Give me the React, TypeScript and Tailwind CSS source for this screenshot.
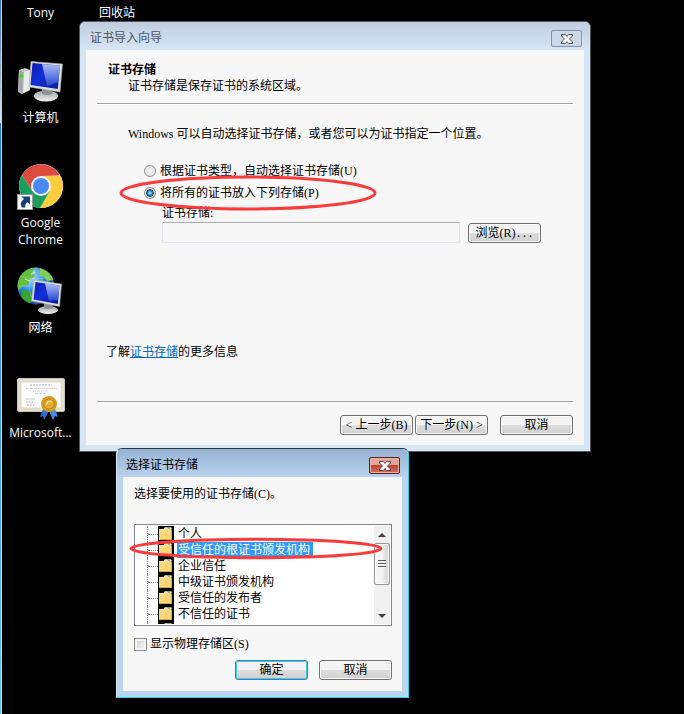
import React, { useState } from 'react';

const stores = [
  '个人',
  '受信任的根证书颁发机构',
  '企业信任',
  '中级证书颁发机构',
  '受信任的发布者',
  '不信任的证书',
];

// Half-width latin run inside the 12px dialog text
const En: React.FC<{ children: React.ReactNode; mono?: boolean }> = ({ children, mono }) => (
  <span className={`leading-none whitespace-pre ${mono ? "font-['Liberation_Mono',monospace] text-[10px]" : "font-['Liberation_Serif',serif]"}`}>
    {children}
  </span>
);

const Screen: React.FC<{ id: string }> = ({ id }) => (
  <defs>
    <linearGradient id={`${id}-screen`} x1="0" y1="0" x2="1" y2="1">
      <stop offset="0" stopColor="#0a1cb4" />
      <stop offset="0.45" stopColor="#1230d8" />
      <stop offset="1" stopColor="#0a1a9c" />
    </linearGradient>
    <linearGradient id={`${id}-shine`} x1="0" y1="0" x2="0" y2="1">
      <stop offset="0" stopColor="#d3e0fb" />
      <stop offset="1" stopColor="#2a52d8" />
    </linearGradient>
    <linearGradient id={`${id}-base`} x1="0" y1="0" x2="0" y2="1">
      <stop offset="0" stopColor="#9aa0a2" />
      <stop offset="1" stopColor="#f1f3f3" />
    </linearGradient>
  </defs>
);

const ComputerIcon = () => (
  <svg viewBox="0 0 48 48" className="size-12" aria-hidden="true">
    <Screen id="pc" />
    <path d="M2 13l6-2 5 2v20l-8 4-4-2z" fill="#c9cccb" />
    <path d="M2 13l5 2-1 21-5-2z" fill="#a5aaa9" />
    <path d="M7 15l6-2v20l-7 3z" fill="#e9ebea" />
    <path d="M3 17l3 1v3l-3-1z" fill="#37d420" />
    <ellipse cx="29" cy="39" rx="12" ry="5.5" fill="url(#pc-base)" />
    <path d="M25 31h9l1 6q-5 2-10 0z" fill="#8c9294" />
    <path d="M14 4.500L45.500 7 43 35 12 30z" fill="#dfe0dc" stroke="#a9aaa6" strokeWidth="0.6" />
    <path d="M15.500 6L43 8.500 40.800 32 13.500 28z" fill="url(#pc-screen)" />
    <path d="M25 7L43 8.500 41.600 25 30 29z" fill="url(#pc-shine)" opacity="0.8" />
  </svg>
);

const ChromeIcon = () => (
  <svg viewBox="0 0 48 48" className="size-12" aria-hidden="true">
    <circle cx="24" cy="24" r="22" fill="#fff" />
    <path d="M24 24L5 13A22 22 0 0 1 43 13.500L24 14z" fill="#dd4b3e" />
    <path d="M24 14h19.500A22 22 0 0 1 22.500 46L32.700 29z" fill="#ffcd40" />
    <path d="M5 13a22 22 0 0 0 18 33l9.700-17L24 30l-8.700-1z" fill="#1a9f5d" />
    <path d="M5 13l10.300 16L14 22l10-8z" fill="#dd4b3e" />
    <circle cx="24" cy="24" r="10" fill="#f4f4f4" />
    <circle cx="24" cy="24" r="8" fill="#4a8af4" />
    <path d="M0.500 32.500h15v15h-15z" fill="#fff" stroke="#9a9a9a" />
    <path d="M4.500 34.500H13v8l-2.500-2.300Q7.500 42 8.500 45.500H5Q1.500 41 7 37z" fill="#173f7c" />
  </svg>
);

const NetworkIcon = () => (
  <svg viewBox="0 0 48 48" className="size-12" aria-hidden="true">
    <Screen id="net" />
    <defs>
      <radialGradient id="globe" cx="0.35" cy="0.25" r="0.8">
        <stop offset="0" stopColor="#b6e4ff" />
        <stop offset="0.45" stopColor="#2f8fe0" />
        <stop offset="1" stopColor="#11299a" />
      </radialGradient>
      <clipPath id="globe-clip"><circle cx="19" cy="19" r="18.500" /></clipPath>
    </defs>
    <circle cx="19" cy="19" r="18.500" fill="url(#globe)" />
    <g clipPath="url(#globe-clip)">
      <path d="M3 7q6-8 14-6l-2 5 3 3-5 4-2 5-5 1-4 4-4-6z" fill="#64bf3e" />
      <path d="M5 23l7 1 5 5-2 6-4 2-7-6z" fill="#39a52c" />
      <path d="M23 1l9 4 5 8-7 1-3-4-4-1z" fill="#7fcf50" />
      <path d="M14 7l4-2M8 12l5 2" stroke="#e5f58a" />
      <path d="M1 19h36M19 0q-14 19 0 38M19 0q14 19 0 38M4 9q15 6 31 0" fill="none" stroke="#bfe2ff" strokeWidth="0.5" opacity="0.6" />
    </g>
    <ellipse cx="31" cy="43" rx="10" ry="4" fill="url(#net-base)" />
    <path d="M27 35h8l1 6q-5 2-9 0z" fill="#8c9294" />
    <path d="M17 13L44.500 17 42.500 39.500 14.500 34z" fill="#dfe0dc" stroke="#a9aaa6" strokeWidth="0.6" />
    <path d="M18.500 15L42.500 18.500 40.800 37 16.500 32.500z" fill="url(#net-screen)" />
    <path d="M28 16.500l14.500 2L41 33l-9 1z" fill="url(#net-shine)" opacity="0.8" />
  </svg>
);

const CertificateIcon = () => (
  <svg viewBox="0 0 48 48" className="size-12" aria-hidden="true">
    <rect x="0.500" y="6.500" width="47" height="33" rx="1.500" fill="#e6dfcf" stroke="#cdc3ad" />
    <rect x="4" y="10" width="40" height="26" fill="#fdfdfb" stroke="#d2cabb" strokeWidth="0.6" />
    <path d="M13 13h22" stroke="#a9b0c6" strokeDasharray="2 1" />
    <path d="M9 16.500h31M16 19h16M18 21.500h12" stroke="#cdd2de" strokeDasharray="3 1" />
    <path d="M9 27h9M9 30h7" stroke="#c0c7dc" />
    <path d="M10 33h7" stroke="#e59a80" strokeDasharray="2 1" />
    <path d="M26 37l6 2-5 9-1-4-3 1z" fill="#2b6fd6" />
    <path d="M32 39l6-2 3 8-3-1-2 4z" fill="#3f8be6" />
    <circle cx="32" cy="32" r="8" fill="#d59b1d" />
    <circle cx="32" cy="32" r="5" fill="#e3ae35" stroke="#b97d10" strokeWidth="0.8" />
    <path d="M29 33q2-5 6-3" fill="none" stroke="#fbe29a" strokeWidth="1.200" />
  </svg>
);

const FolderIcon = () => (
  <svg viewBox="0 0 16 16" className="size-4 shrink-0" aria-hidden="true">
    <path d="M0 0h16v16H0z" fill="#000" />
    <path d="M1 3h5V1.500h7.500V14H1z" fill="#f6d77c" />
    <path d="M1 4h5.500l1-1.500H13.500" fill="none" stroke="#fff3b8" />
    <path d="M7 1.500h6v1.500H7z" fill="#f4f0dc" />
    <path d="M9.500 1.500h2.500v1H9.500z" fill="#4a8ed0" />
    <path d="M1 13.500h12.500V4" fill="none" stroke="#d9a93f" />
  </svg>
);

const CloseGlyph: React.FC<{ active?: boolean }> = ({ active }) => (
  <svg viewBox="0 0 12 10" className="w-3 h-2.5" aria-hidden="true">
    <path
      d="M0.500 0.500h4L6 2.500 7.500 0.500h4v1.500L8.500 5l3 3v1.500h-4L6 7.500 4.500 9.500h-4V8l3-3-3-3z"
      fill="#fff"
      stroke={active ? '#6d4247' : '#4d5766'}
      strokeWidth="1"
      strokeLinejoin="round"
    />
  </svg>
);

const Mark: React.FC<{ className: string }> = ({ className }) => (
  <svg viewBox="0 0 256 36" preserveAspectRatio="none" className={`absolute pointer-events-none overflow-visible ${className}`} aria-hidden="true">
    <ellipse cx="128" cy="18" rx="127" ry="16" fill="none" stroke="#fb3b3b" strokeWidth="3" vectorEffect="non-scaling-stroke" />
  </svg>
);

const PushButton: React.FC<{ children: React.ReactNode; primary?: boolean }> = ({ children, primary }) => (
  <button className={`w-[73px] h-5 flex items-center justify-center rounded-[3px] border whitespace-nowrap bg-linear-to-b from-[#f3f3f3] from-50% via-[#dedede] via-50% to-[#d0d0d0] ${
    primary ? 'border-[#3c7fb1] shadow-[inset_0_0_0_1px_#48c8f0]' : 'border-[#707070] shadow-[inset_0_0_0_1px_#fafafa]'
  }`}>
    <span>{children}</span>
  </button>
);

const DesktopIcon: React.FC<{ icon: React.ReactNode; label: string }> = ({ icon, label }) => (
  <li className="h-[105px]">
    <a href="#" className="flex flex-col items-center gap-1 text-center">
      {icon}
      <span className="w-[68px]">{label}</span>
    </a>
  </li>
);

const WizardWindow = () => {
  const [mode, setMode] = useState('manual');
  const radio = "appearance-none size-3 shrink-0 rounded-full border border-[#8e8f8f] bg-radial from-[#f6f6f6] to-[#cfd3d6] shadow-[inset_0_0_0_1px_#f4f4f4] checked:from-[#7fd8f8] checked:from-10% checked:via-[#0f4a78] checked:via-50% checked:to-[#e4e6e8] checked:to-60%";

  return (
    <section aria-label="证书导入向导" className="absolute left-[79px] top-[21px] w-[512px] rounded-t-md border border-[#54555c] bg-[#d6e6f5] px-1.5 pb-1.5">
      <div className="absolute inset-x-0 top-0 h-7 rounded-t-md bg-linear-to-b from-[#c0cddf] to-[#d6e6f5]" />
      <header className="relative flex items-center justify-between pt-2 pb-[3px] pl-1 pr-0.5">
        <h1 className="text-[#4b5560] leading-[17px]">证书导入向导</h1>
        <button aria-label="关闭" className="w-[31px] h-[17px] flex items-center justify-center rounded-[2px] border border-[#8390ae] bg-[#cad8e8]">
          <CloseGlyph />
        </button>
      </header>

      <div className="bg-[#f7f7f7] px-[11px] pt-3 pb-2.5">
        <div className="border-b border-[#a0a0a0] shadow-[0_1px_0_#fff] pb-[9px] pl-[11px]">
          <h2 className="font-bold">证书存储</h2>
          <p className="pl-5">证书存储是保存证书的系统区域。</p>
        </div>

        <p className="mt-[22px] pl-[31px]"><En>Windows </En>可以自动选择证书存储，或者您可以为证书指定一个位置。</p>

        <div className="mt-[21px] pl-[47px] flex flex-col gap-1.5">
          <label className="flex items-center gap-1">
            <input type="radio" name="mode" className={radio} checked={mode === 'auto'} onChange={() => setMode('auto')} />
            <span>根据证书类型，自动选择证书存储<En>(U)</En></span>
          </label>
          <label className="flex items-center gap-1">
            <input type="radio" name="mode" className={radio} checked={mode === 'manual'} onChange={() => setMode('manual')} />
            <span>将所有的证书放入下列存储<En>(P)</En></span>
          </label>
        </div>

        <div className="mt-1 pl-[65px] pr-8">
          <label htmlFor="store" className="block">证书存储<En>:</En></label>
          <div className="flex items-center gap-2 mt-px">
            <input id="store" type="text" readOnly className="min-w-0 flex-1 h-[21px] border border-t-[#abadb3] border-x-[#e2e3ea] border-b-[#e3e9ef] bg-[#f7f7f7] px-1 outline-none" />
            <PushButton>浏览<En>(R)</En><En mono>...</En></PushButton>
          </div>
        </div>

        <p className="mt-[101px] pl-[9px]">了解<a href="#" className="text-[#0066cc] underline">证书存储</a>的更多信息</p>

        <footer className="mt-[41px] pt-[13px] border-t border-[#a0a0a0] shadow-[inset_0_1px_0_#fff] flex justify-end">
          <div className="flex gap-0.5 mr-3">
            <PushButton><En>{'< '}</En>上一步<En>(B)</En></PushButton>
            <PushButton>下一步<En>{'(N) >'}</En></PushButton>
          </div>
          <PushButton>取消</PushButton>
        </footer>
      </div>
      <Mark className="left-10 top-[153px] w-64 h-9" />
    </section>
  );
};

const StoreWindow = () => {
  const [selected, setSelected] = useState(1);

  return (
    <section aria-label="选择证书存储" className="absolute left-[116px] top-[448px] w-[293px] rounded-t-md border border-t-[#2a3a42] border-l-[#d8ecf5] border-r-[#2fd0ea] border-b-[#2fd0ea] bg-[#bcd5ef] px-1.5 pb-1.5">
      <div className="absolute inset-x-0 top-0 h-7 rounded-t-md bg-linear-to-b from-[#98b3d3] to-[#b9d1ec]" />
      <header className="relative flex items-center justify-between pt-2 pb-[3px] pl-[3px] pr-0.5">
        <h1 className="leading-[17px]">选择证书存储</h1>
        <button aria-label="关闭" className="w-[31px] h-[17px] flex items-center justify-center rounded-[2px] border border-[#5a1f28] bg-linear-to-b from-[#e2a598] from-45% via-[#c0412f] via-50% to-[#d0735c] shadow-[inset_0_0_0_1px_#e9b3a6]">
          <CloseGlyph active />
        </button>
      </header>

      <div className="bg-[#f7f7f7] pl-[11px] pr-2.5 pt-[9px] pb-[11px]">
        <p>选择要使用的证书存储<En>(C)</En>。</p>

        <div className="mt-[22px] h-[102px] flex border border-[#828790] bg-white py-px pr-px overflow-hidden">
          <ul role="tree" className="flex-1 overflow-hidden">
            {stores.map((name, i) => (
              <li key={i} role="treeitem" aria-selected={i === selected} onClick={() => setSelected(i)} className="flex items-center h-4 ml-3 border-l border-dotted border-[#808080]">
                <span className="w-2.5 border-t border-dotted border-[#808080]" />
                <FolderIcon />
                <span className={`ml-[3px] pl-px pr-[3px] ${i === selected ? 'bg-[#3399ff] text-white' : ''}`}>{name}</span>
              </li>
            ))}
            {/* top of the next folder, below the fold */}
            <li aria-hidden="true" className="flex items-center h-4 ml-3 pl-2.5 border-l border-dotted border-[#808080]">
              <FolderIcon />
            </li>
          </ul>
          <div className="w-4 flex flex-col bg-[#f0f0f0]">
            <button aria-label="向上" className="h-[17px] flex items-center justify-center">
              <svg viewBox="0 0 8 4" className="w-2 h-1" aria-hidden="true"><path d="M0 4l4-4 4 4z" fill="#404040" /></svg>
            </button>
            <div className="h-[42px] flex flex-col items-center justify-center gap-px rounded-[2px] border border-[#979797] bg-linear-to-r from-[#f5f5f5] from-45% to-[#cfd0d2] shadow-[inset_0_0_0_1px_#fafafa]">
              <span className="w-2 h-0.5 border-t border-[#55585c] bg-white" />
              <span className="w-2 h-0.5 border-t border-[#55585c] bg-white" />
              <span className="w-2 h-0.5 border-t border-[#55585c] bg-white" />
            </div>
            <button aria-label="向下" className="mt-auto h-[17px] flex items-center justify-center">
              <svg viewBox="0 0 8 4" className="w-2 h-1" aria-hidden="true"><path d="M0 0l4 4 4-4z" fill="#404040" /></svg>
            </button>
          </div>
        </div>

        <label className="mt-2.5 flex items-center gap-[3px]">
          <input type="checkbox" className="appearance-none size-[13px] border border-[#8e8f8f] bg-linear-to-br from-[#cdd1d6] to-[#f8f8f8] shadow-[inset_0_0_0_2px_#f4f4f4] checked:bg-[#3399ff]" />
          <span>显示物理存储区<En>(S)</En></span>
        </label>

        <footer className="mt-2 flex justify-end gap-[11px]">
          <PushButton primary>确定</PushButton>
          <PushButton>取消</PushButton>
        </footer>
      </div>
      <Mark className="left-[13px] top-[89px] w-[252px] h-[21px]" />
    </section>
  );
};

const App = () => (
  <main className="relative min-h-screen overflow-hidden bg-black flex text-[12px] leading-4 text-black font-['Liberation_Sans','Noto_Sans_CJK_SC',sans-serif]">
    {/* edge of the window behind the desktop */}
    <div className="flex flex-col w-0.5 border-r border-[#b5dcf0]">
      <div className="h-[123px] bg-linear-to-b from-[#3a6ea5] to-[#cfe6f2]" />
      <div className="flex-1 bg-linear-to-b from-[#1f78b4] to-[#6cc4e4]" />
    </div>
    <div className="flex pt-1 text-white leading-[17px] font-['Open_Sans','Noto_Sans_CJK_SC',sans-serif]">
      <ul className="w-[77px]">
        <li className="h-[53px] text-center"><a href="#">Tony</a></li>
        <DesktopIcon icon={<ComputerIcon />} label="计算机" />
        <DesktopIcon icon={<ChromeIcon />} label="Google Chrome" />
        <DesktopIcon icon={<NetworkIcon />} label="网络" />
        <DesktopIcon icon={<CertificateIcon />} label="Microsoft..." />
      </ul>
      <ul className="w-[76px]">
        <li className="text-center"><a href="#">回收站</a></li>
      </ul>
    </div>
    <WizardWindow />
    <StoreWindow />
  </main>
);

export default App;
